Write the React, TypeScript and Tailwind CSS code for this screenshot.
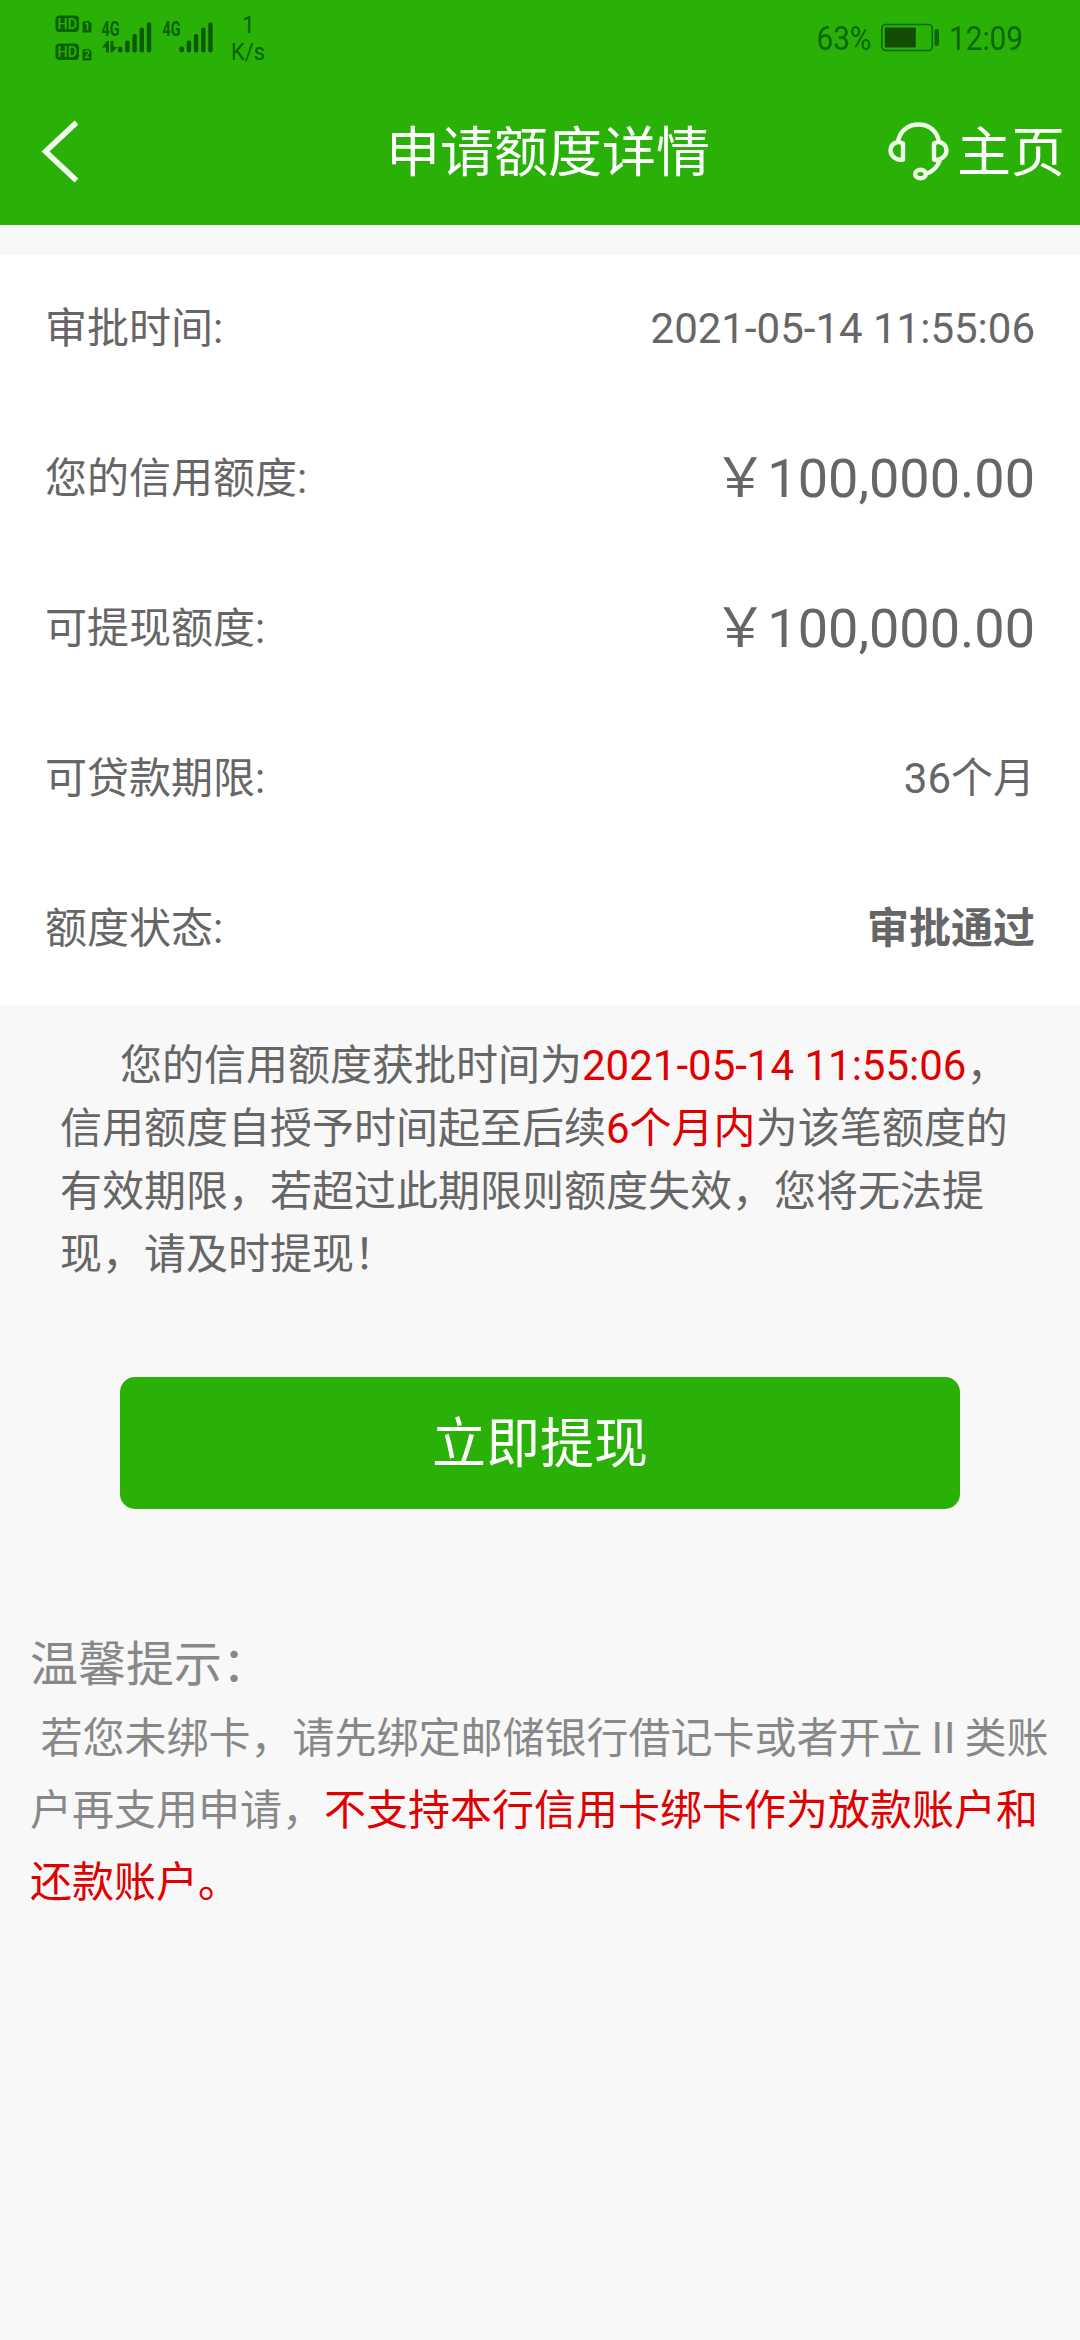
import type { ReactNode } from 'react';
import clsx from 'clsx';

const rows = [
  { label: '审批时间:', value: '2021-05-14 11:55:06' },
  { label: '您的信用额度:', value: '￥100,000.00', large: true },
  { label: '可提现额度:', value: '￥100,000.00', large: true },
  { label: '可贷款期限:', value: '36个月' },
  { label: '额度状态:', value: '审批通过', bold: true },
];

function SignalBars({ x }: { x: number }) {
  const heights = [6, 12, 18.5, 25, 30];
  return (
    <g fill="#0a5a03">
      {heights.map((h, i) => (
        <rect key={h} x={x + i * 7.2} y={52.5 - h} width="4.4" height={h} rx="1.8" />
      ))}
    </g>
  );
}

function HdBadge({ y, sim }: { y: number; sim: string }) {
  return (
    <g>
      <rect x="55.5" y={y} width="23.5" height="16.5" rx="4" fill="#0b6204" />
      <text
        x="57.5"
        y={y + 13.8}
        fontSize="15.5"
        fontWeight="500"
        fill="#2ab108"
        textLength="19.5"
        lengthAdjust="spacingAndGlyphs"
      >
        HD
      </text>
      <path d={`M84 ${y + 5.5}h5l2.5 2.5v9h-9v-10z`} fill="#0b6204" />
      <text x="84.2" y={y + 14.8} fontSize="10" fontWeight="700" fill="#2ab108">
        {sim}
      </text>
    </g>
  );
}

function StatusBar() {
  return (
    <div className="flex h-[78px] justify-between">
      <svg width="290" height="78" fill="#0b6204" fontFamily="Roboto, sans-serif">
        <HdBadge y={15.5} sim="1" />
        <HdBadge y={43.5} sim="2" />
        <text x="101.5" y="36" fontSize="20" fontWeight="700" textLength="18" lengthAdjust="spacingAndGlyphs">
          4G
        </text>
        <path d="M102 47.5l5-6.5h2v11.5h-3v-5zM110.5 41h3v6h4l-5.5 5.5h-1.5z" />
        <SignalBars x={118} />
        <text x="162.5" y="36" fontSize="20" fontWeight="700" textLength="18" lengthAdjust="spacingAndGlyphs">
          4G
        </text>
        <SignalBars x={179.5} />
        <text x="242" y="33" fontSize="23">
          1
        </text>
        <text x="231" y="60" fontSize="23" textLength="34" lengthAdjust="spacingAndGlyphs">
          K/s
        </text>
      </svg>
      <svg width="290" height="78" fill="#0b6804" fontFamily="Roboto, sans-serif">
        <text x="26.5" y="50" fontSize="34" textLength="55" lengthAdjust="spacingAndGlyphs">
          63%
        </text>
        <rect x="91.8" y="24.5" width="50.5" height="26" rx="4" fill="none" stroke="#0b6804" strokeWidth="1.6" />
        <rect x="94.8" y="27.5" width="31" height="20" rx="1" fill="#134d04" />
        <rect x="144.5" y="29" width="4.5" height="17" rx="2" />
        <text x="159" y="50" fontSize="34" textLength="74" lengthAdjust="spacingAndGlyphs">
          12:09
        </text>
      </svg>
    </div>
  );
}

function HeadsetIcon() {
  return (
    <svg width="62" height="62" viewBox="0 0 62 62" fill="none" stroke="#f0ffe9" strokeWidth="4.4">
      <path d="M10 21C11.5 10.5 19.500 3.500 30.500 3.500S49.500 10.500 51 21" />
      <path d="M15 22.500v16s-4.500 1-8-1.500-4.500-5.500-4.500-7.500.8-5.500 4.500-7.500 8 .5 8 .5z" strokeLinejoin="round" />
      <path d="M46 22.500v16s4.500 1 8-1.500 4.500-5.500 4.500-7.500-.8-5.500-4.500-7.500-8 .5-8 .5z" strokeLinejoin="round" />
      <path d="M52 39C49.500 45.500 45.500 50.500 38.500 52.500" />
      <ellipse cx="32.500" cy="53" rx="5.300" ry="4.300" />
    </svg>
  );
}

function Header() {
  return (
    <header className="h-[225px] bg-[#2ab108] text-white">
      <StatusBar />
      <div className="grid h-[147px] grid-cols-[1fr_324px_1fr] items-center pr-[15px] pl-[31px]">
        <button type="button" className="ml-[9px] w-fit" aria-label="返回">
          <svg width="40" height="64" viewBox="0 0 40 64" fill="none" stroke="#f3ffee" strokeWidth="5.5">
            <path d="M36.5 2.5L5.5 31.5l31 29" />
          </svg>
        </button>
        <h1 className="pt-[5px] text-[54px] leading-[80px] whitespace-nowrap">申请额度详情</h1>
        <div className="flex items-center justify-end gap-[7px] text-[54px] leading-[80px] whitespace-nowrap">
          <HeadsetIcon />
          <span className="pt-[5px]">主页</span>
        </div>
      </div>
    </header>
  );
}

function Red({ children }: { children: ReactNode }) {
  return <span className="text-[#e00000]">{children}</span>;
}

export default function App() {
  return (
    <div
      lang="zh-CN"
      className="h-[2340px] w-[1080px] overflow-hidden bg-[#f8f8f8] font-[Roboto,'Noto_Sans_CJK_SC',sans-serif] text-[42px] text-[#666]"
    >
      <Header />

      <section className="mt-[30px] bg-white px-[45px]">
        {rows.map((row) => (
          <div key={row.label} className="flex h-[150px] items-center justify-between pb-[3px]">
            <span>{row.label}</span>
            <span className={clsx(row.large && 'text-[54px]', row.bold && 'font-bold')}>{row.value}</span>
          </div>
        ))}
      </section>

      <p className="mt-[29px] px-[60px] indent-[60px] leading-[63px]">
        您的信用额度获批时间为<Red>2021-05-14 11:55:06</Red>，信用额度自授予时间起至后续<Red>6个月内</Red>
        为该笔额度的有效期限，若超过此期限则额度失效，您将无法提现，请及时提现！
      </p>

      <button
        type="button"
        className="mx-[120px] mt-[91px] h-[132px] w-[840px] rounded-[15px] bg-[#2ab108] pt-[2px] text-[54px] text-white"
      >
        立即提现
      </button>

      <section className="mt-[118px] px-[30px] leading-[72px] text-[#888]">
        <h2 className="text-[48px] leading-[76px]">温馨提示：</h2>
        <p>
          &nbsp;若您未绑卡，请先绑定邮储银行借记卡或者开立Ⅱ类账户再支用申请，
          <Red>不支持本行信用卡绑卡作为放款账户和还款账户。</Red>
        </p>
      </section>
    </div>
  );
}
